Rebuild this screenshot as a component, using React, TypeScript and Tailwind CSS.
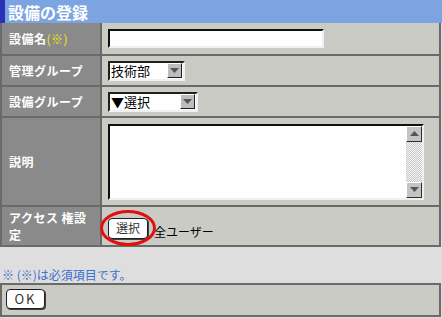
import React from 'react';

const font = { fontFamily: '"Noto Sans CJK JP", "MS PGothic", sans-serif' };

const Label: React.FC<{ children: React.ReactNode; className?: string }> = ({ children, className = '' }) => (
  <div className={`w-[100px] shrink-0 bg-[#8a8a8a] border-r-2 border-[#6a6a6a] pl-[7px] flex items-center text-white font-bold text-[12px] leading-[15px] tracking-[0.5px] ${className}`}>
    {children}
  </div>
);

const Arrow: React.FC<{ up?: boolean }> = ({ up }) => (
  <svg width="9" height="5" viewBox="0 0 9 5">
    <path d={up ? 'M0 5 L4.5 0 L9 5 Z' : 'M0 0 L9 0 L4.5 5 Z'} fill="#555" />
  </svg>
);

const Select: React.FC<{ label: string; width: string }> = ({ label, width }) => (
  <div className={`${width} h-[20px] bg-white border-2 border-t-[#202020] border-l-[#202020] border-b-[#f0f0f0] border-r-[#f0f0f0] flex items-center`}>
    <span className="flex-1 pl-[1px] text-[13px] leading-none text-black">{label}</span>
    <div className="w-[15px] h-[15px] mr-[1px] bg-[#bdbdbd] border border-t-white border-l-white border-b-[#202020] border-r-[#202020] flex items-center justify-center">
      <Arrow />
    </div>
  </div>
);

export default function App() {
  return (
    <div className="w-[442px] h-[318px] bg-[#dedede] overflow-hidden" style={font}>
      <div className="h-[23px] bg-[#7ba4e0] border-l-[5px] border-[#2a30b4] pl-[3px] flex items-center text-white font-bold text-[16px]">
        設備の登録
      </div>
      <div className="w-[441px] border-2 border-t-0 border-[#6a6a6a] bg-[#cbcbc6]">
        <div className="flex h-[33px] border-b-2 border-[#6a6a6a]">
          <Label>
            設備名<span className="text-[#f5f000] font-normal">(※)</span>
          </Label>
          <div className="flex-1 flex items-center pl-[6px]">
            <div className="w-[216px] h-[19px] bg-white border-2 border-t-[#101010] border-l-[#101010] border-b-[#f0f0f0] border-r-[#f0f0f0]" />
          </div>
        </div>
        <div className="flex h-[31px] border-b-2 border-[#6a6a6a]">
          <Label>管理グループ</Label>
          <div className="flex-1 flex items-center pl-[6px]">
            <Select label="技術部" width="w-[77px]" />
          </div>
        </div>
        <div className="flex h-[31px] border-b-2 border-[#6a6a6a]">
          <Label>設備グループ</Label>
          <div className="flex-1 flex items-center pl-[6px]">
            <Select label="▼選択" width="w-[90px]" />
          </div>
        </div>
        <div className="flex h-[89px] border-b-2 border-[#6a6a6a]">
          <Label>説明</Label>
          <div className="flex-1 flex items-center pl-[6px]">
            <div className="w-[316px] h-[76px] bg-white border-2 border-t-[#101010] border-l-[#101010] border-b-[#f0f0f0] border-r-[#f0f0f0] flex justify-end">
              <div className="w-[16px] h-full flex flex-col bg-[repeating-conic-gradient(#c8c8c8_0_25%,#f4f4f4_0_50%)] bg-[length:2px_2px]">
                <div className="h-[16px] bg-[#c4c4c4] border border-t-white border-l-white border-b-[#303030] border-r-[#303030] flex items-center justify-center">
                  <Arrow up />
                </div>
                <div className="flex-1" />
                <div className="h-[16px] bg-[#c4c4c4] border border-t-white border-l-white border-b-[#303030] border-r-[#303030] flex items-center justify-center">
                  <Arrow />
                </div>
              </div>
            </div>
          </div>
        </div>
        <div className="flex h-[38px]">
          <Label className="!items-start pt-[2px] !leading-[17px]">
            <span>
              アクセス 権設
              <br />定
            </span>
          </Label>
          <div className="flex-1 flex items-center pl-[6px] pt-[4px]">
            <div className="relative">
              <div className="absolute -left-[8px] -top-[8px] w-[56px] h-[36px] rounded-[50%] border-[3px] border-[#e01010]" />
              <div className="w-[40px] h-[21px] bg-white border border-[#202020] rounded-[4px] shadow-[1px_1px_0_#404040] flex items-center justify-center text-[12px] text-[#333]">
                選択
              </div>
            </div>
            <span className="ml-[6px] mt-[8px] text-[12px] text-black">全ユーザー</span>
          </div>
        </div>
      </div>
      <div className="mt-[20px] pl-[2px] text-[12px] leading-[15px] text-[#3a6fd0]">※ (※)は必須項目です。</div>
      <div className="mt-[1px] w-[441px] h-[34px] border-2 border-[#6a6a6a] bg-[#cbcbc6] pl-[4px] pt-[4px]">
        <div className="w-[39px] h-[20px] bg-white border border-[#202020] rounded-[4px] shadow-[1px_1px_0_#404040] flex items-center justify-center text-[13px] text-[#333] tracking-[2px]">
          OK
        </div>
      </div>
    </div>
  );
}
